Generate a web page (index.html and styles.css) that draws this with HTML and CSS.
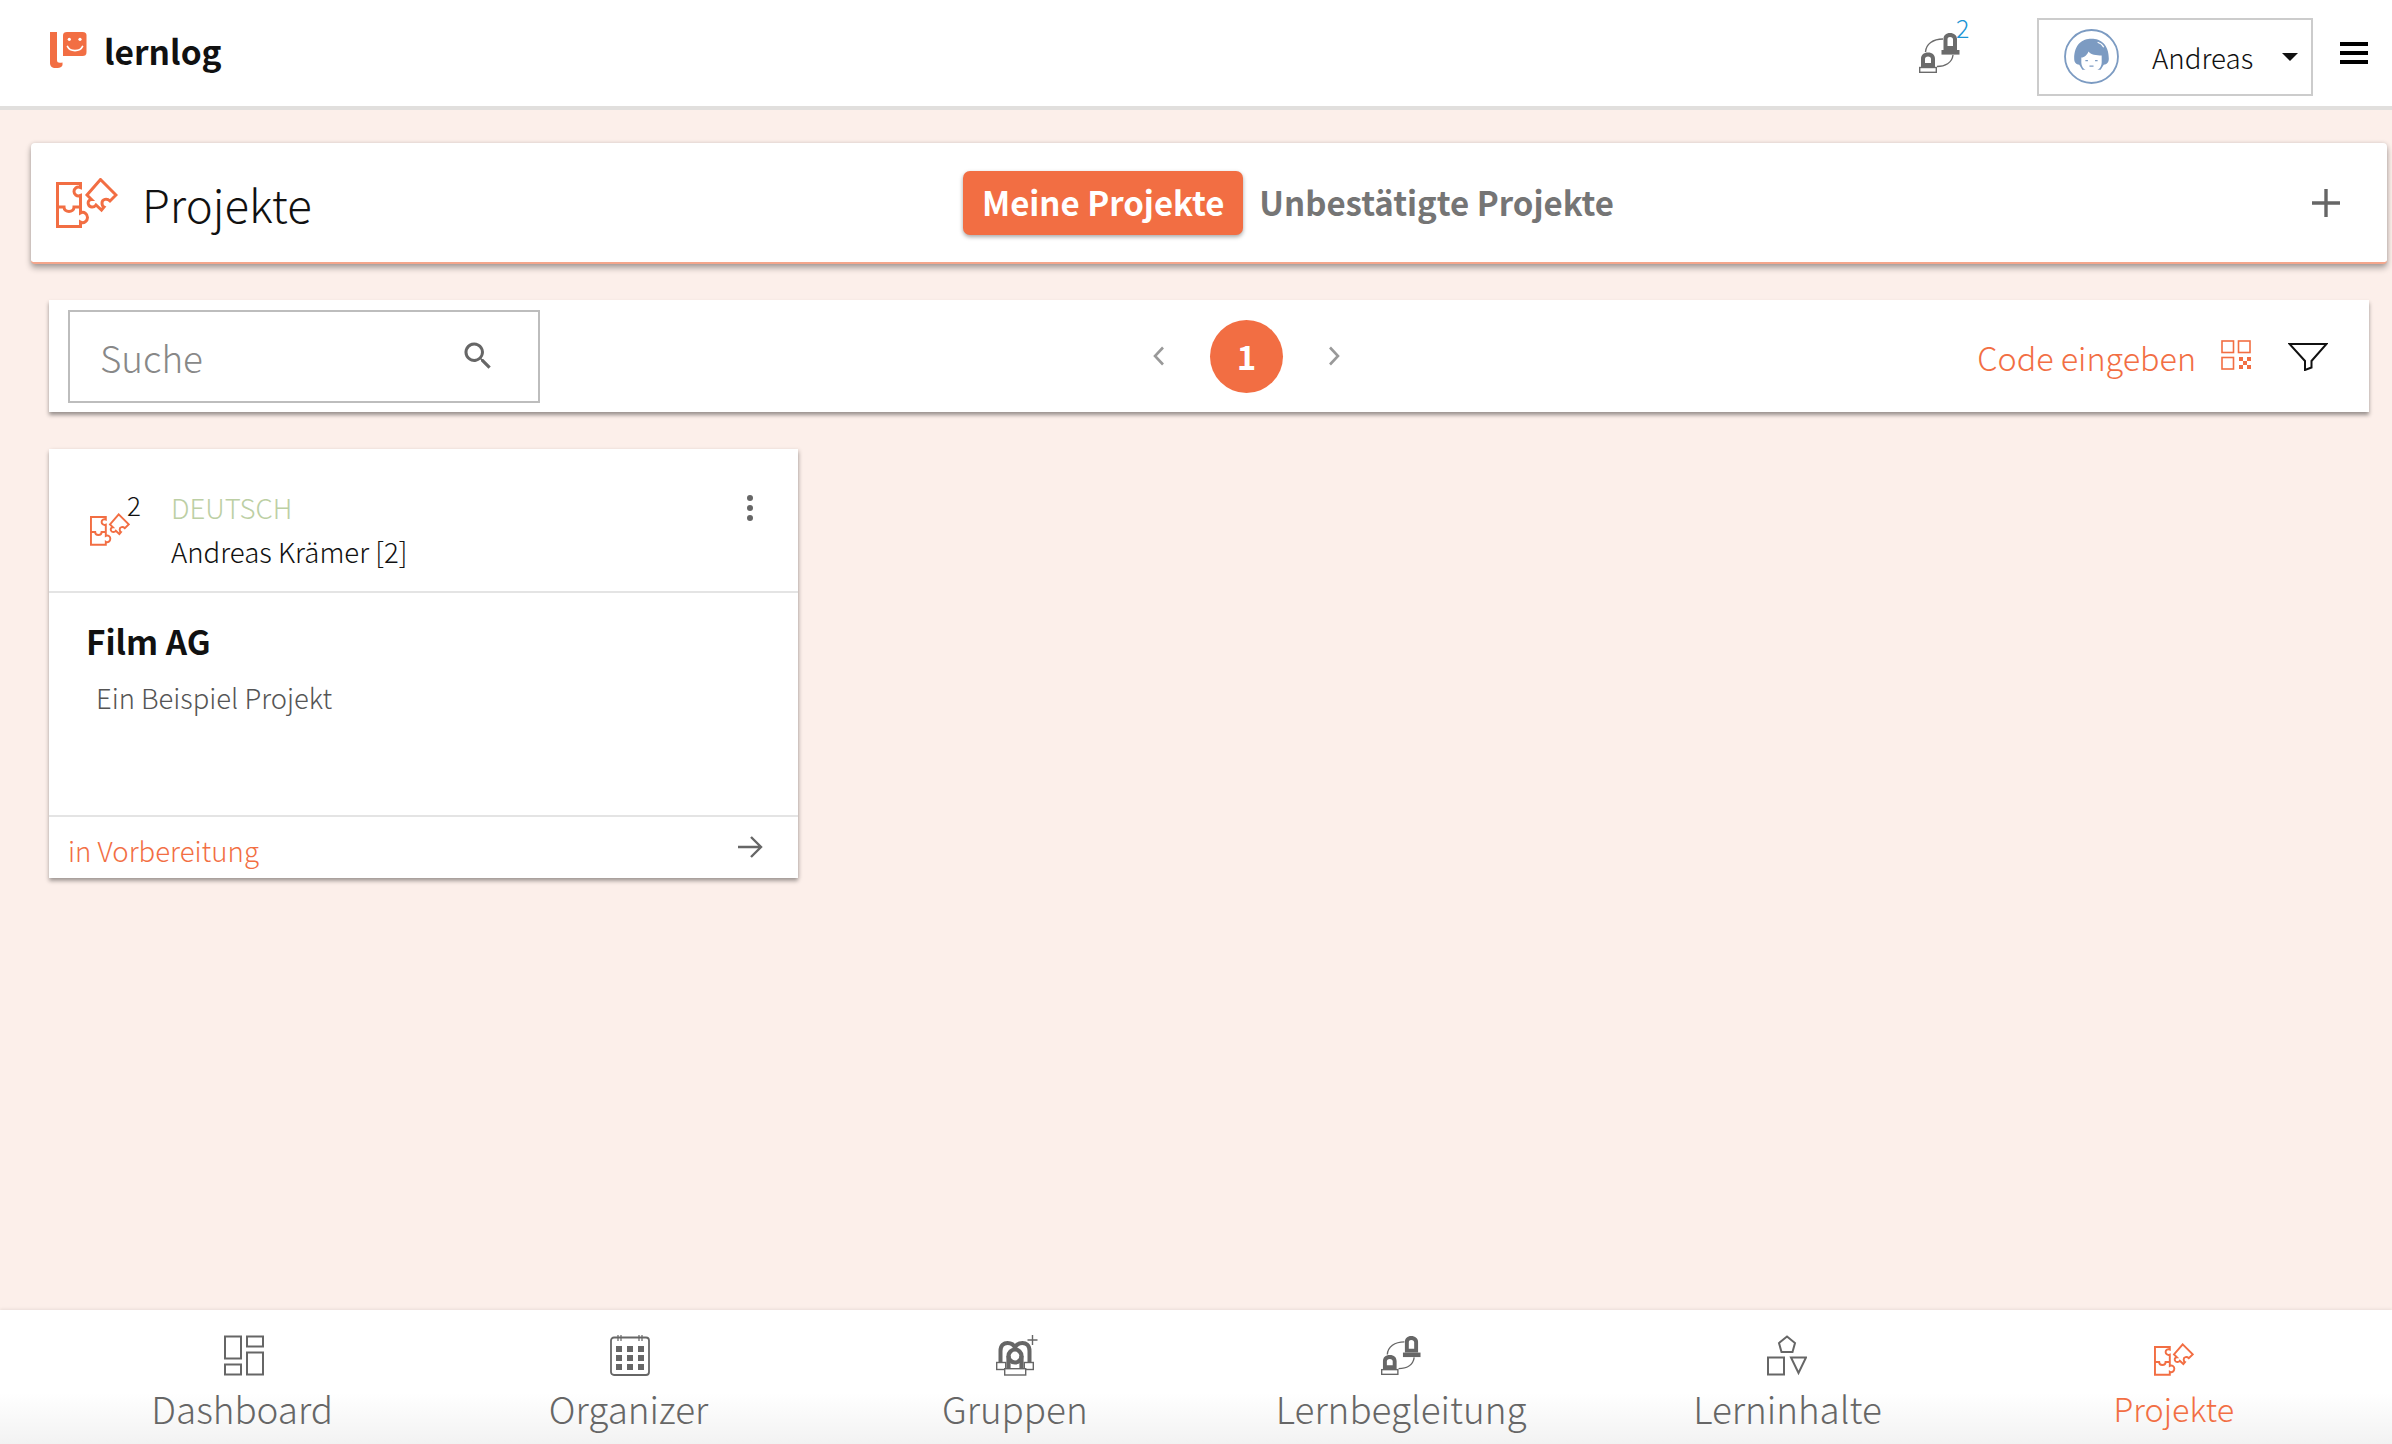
FILE: index.html
```html
<!DOCTYPE html>
<html lang="de">
<head>
<meta charset="utf-8">
<title>lernlog</title>
<link rel="stylesheet" href="styles.css">
</head>
<body>
<svg class="defs" width="0" height="0">
  <symbol id="puzzle" viewBox="0 0 62 50">
    <g fill="none" stroke="currentColor" stroke-width="3">
      <path d="M1.500 5.500H24.500V9.500C20.500 8 18 11 18 13.500C18 16 20.500 19 24.500 17.500V29V35C28 33 31.500 36 31.500 39.500C31.500 43 28 46 24.500 44V48.500H1.500Z"/>
      <path d="M1.500 29H8C8 35 18 35 18 29H24.500"/>
      <path d="M44.500 1.500L60 17L54 23C51 20 46 21 46 25C46 27 47 28.500 48 29L45.500 32L40 27C38 30 33.500 29.500 32.500 26.500C31.500 24 33 21.500 35.500 21.500L31 17Z"/>
    </g>
  </symbol>
  <symbol id="mentor" viewBox="0 0 41 40">
    <g fill="none" stroke="currentColor">
      <path stroke-width="1.400" d="M6.500 19C7 11 14 6 24 6M18 33.500C26 33.500 33 30 34 22"/>
      <path fill="currentColor" stroke="none" fill-rule="evenodd" d="M2 34V26C2 22 4.500 19.500 9 19.500C13.500 19.500 16 22 16 26V34ZM6 30H12V26C12 24.500 11 23.500 9 23.500C7 23.500 6 24.500 6 26Z"/>
      <path fill="currentColor" stroke="none" fill-rule="evenodd" d="M24.500 17V6C24.500 2.500 27 0 31 0C35 0 38 2.500 38 6V17ZM28.500 13H34V6.500C34 5 33 4 31 4C29 4 28.500 5 28.500 6.500Z"/>
      <rect x="0.700" y="34.500" width="16.600" height="4.800" fill="#fff" stroke-width="1.400"/>
      <rect x="22.500" y="17" width="18" height="4.600" fill="currentColor" stroke="none"/>
    </g>
  </symbol>
</svg>

<div class="page">
  <header class="topbar">
    <div class="brand">
      <svg class="brand-mark" viewBox="0 0 37 37" aria-hidden="true">
        <path fill="#f26e43" d="M0 0H7V28C7 31 9 31 12.500 30.500V33C12 35.500 9 36 5.500 36C2 36 0 34 0 31Z"/>
        <path fill="#f26e43" d="M13 3.500C13 1 14.500 0 17 0H32.500C35.500 0 36.500 1.500 36.500 3.500V20C36.500 23 35 24 32.500 24H13Z"/>
        <circle cx="19.300" cy="7.300" r="1.600" fill="#fff"/><circle cx="30" cy="7.300" r="1.600" fill="#fff"/>
        <path d="M17.500 14.500C20 20 30 20 32.500 14.500" fill="none" stroke="#fff" stroke-width="1.800" stroke-linecap="round"/>
      </svg>
      <span class="brand-name">lernlog</span>
    </div>
    <div class="top-actions">
      <div class="notify">
        <svg class="icon-mentor"><use href="#mentor"/></svg>
        <span class="notify-count">2</span>
      </div>
      <div class="user">
        <svg class="avatar" viewBox="0 0 54 54" aria-hidden="true">
          <circle cx="27" cy="27" r="26" fill="#fff" stroke="#7c9bc2" stroke-width="1.800"/>
          <path fill="#7c9bc2" d="M10 29C10 15 18 9.500 27 9.500C36 9.500 44 15 44 29C44 33 42 35 39 35L36 40H18L15 35C12 35 10 33 10 29Z"/>
          <path fill="#fff" d="M17 28C20 28 23 25 24 22C26 25 32 26 37 26V33C37 38 33 42 27 42C21 42 17 38 17 33Z"/>
          <path d="M21 31H23.500M30.500 31H33M25 36.500H29" stroke="#7c9bc2" stroke-width="1.200" fill="none"/>
          <path d="M33 13C36 14 38 16 39 18" stroke="#fff" stroke-width="1.200" fill="none"/>
        </svg>
        <span class="user-name">Andreas</span>
        <span class="caret"></span>
      </div>
      <div class="burger"><span></span><span></span><span></span></div>
    </div>
  </header>

  <main class="content">
    <section class="title-card">
      <div class="title-left">
        <svg class="icon-puzzle-lg"><use href="#puzzle"/></svg>
        <h1 class="title">Projekte</h1>
      </div>
      <div class="tabs">
        <span class="tab tab-active">Meine Projekte</span>
        <span class="tab">Unbestätigte Projekte</span>
      </div>
      <span class="add">
        <svg viewBox="0 0 30 30" aria-hidden="true"><path d="M15 1V29M1 15H29" stroke="#666" stroke-width="3.400" fill="none"/></svg>
      </span>
    </section>

    <section class="toolbar">
      <div class="search">
        <span class="search-text">Suche</span>
        <svg class="search-icon" viewBox="0 0 24 24" aria-hidden="true"><path fill="#666" d="M15.500 14h-.8l-.3-.3A6.500 6.500 0 1 0 13.700 14.400l.3.300v.8l5 5 1.500-1.500zm-6 0a4.500 4.500 0 1 1 0-9 4.500 4.500 0 0 1 0 9z"/></svg>
      </div>
      <nav class="pager">
        <svg class="chev" viewBox="0 0 12 20" aria-hidden="true"><path d="M10 1.500L2 10L10 18.500" fill="none" stroke="#999" stroke-width="2.600"/></svg>
        <span class="page-num">1</span>
        <svg class="chev" viewBox="0 0 12 20" aria-hidden="true"><path d="M2 1.500L10 10L2 18.500" fill="none" stroke="#999" stroke-width="2.600"/></svg>
      </nav>
      <div class="tools">
        <span class="code-label">Code eingeben</span>
        <svg class="qr" viewBox="0 0 30 30" aria-hidden="true">
          <g fill="none" stroke="#f26e43" stroke-width="1.600"><rect x="1" y="1" width="11.500" height="11.500"/><rect x="17.500" y="1" width="11.500" height="11.500"/><rect x="1" y="17.500" width="11.500" height="11.500"/></g>
          <path fill="#f26e43" d="M18 17h4v4h-4zM26 17h4v4h-4zM22 21h4v4h-4zM18 25h4v4h-4zM26 25h4v4h-4z"/>
        </svg>
        <svg class="funnel" viewBox="0 0 40 28" aria-hidden="true"><path d="M1.500 1H38.500L23.500 18V24.500L17 27V18Z" fill="none" stroke="#111" stroke-width="2"/></svg>
      </div>
    </section>

    <article class="card">
      <div class="card-head">
        <div class="card-icon">
          <svg class="icon-puzzle-sm"><use href="#puzzle"/></svg>
          <span class="card-count">2</span>
        </div>
        <div class="card-meta">
          <div class="card-subject">DEUTSCH</div>
          <div class="card-owner">Andreas Krämer [2]</div>
        </div>
        <span class="kebab"><i></i><i></i><i></i></span>
      </div>
      <div class="card-body">
        <h2 class="card-title">Film AG</h2>
        <p class="card-desc">Ein Beispiel Projekt</p>
      </div>
      <div class="card-foot">
        <span class="card-status">in Vorbereitung</span>
        <svg class="arrow" viewBox="0 0 26 24" aria-hidden="true"><path d="M1 12H24M14 2L24 12L14 22" fill="none" stroke="#666" stroke-width="2.400"/></svg>
      </div>
    </article>
  </main>

  <footer class="bottomnav">
    <a class="nav-item">
      <svg class="nav-icon nav-icon-shift" viewBox="0 0 40 40" aria-hidden="true"><g fill="none" stroke="currentColor" stroke-width="2"><rect x="1" y="1" width="16" height="22"/><rect x="1" y="29" width="16" height="10"/><rect x="23" y="1" width="16" height="10"/><rect x="23" y="17" width="16" height="22"/></g></svg>
      <span>Dashboard</span>
    </a>
    <a class="nav-item">
      <svg class="nav-icon nav-icon-shift" viewBox="0 0 40 41" aria-hidden="true"><rect x="1" y="2.500" width="38" height="37.500" rx="3" fill="none" stroke="currentColor" stroke-width="1.800"/><path d="M8 0V6M11 0V6M29 0V6M32 0V6" stroke="currentColor" stroke-width="1.200"/><path fill="currentColor" d="M6 11h6v6H6zM17 11h6v6h-6zM28 11h6v6h-6zM6 20h6v6H6zM17 20h6v6h-6zM28 20h6v6h-6zM6 29h6v6H6zM17 29h6v6h-6zM28 29h6v6h-6z"/></svg>
      <span>Organizer</span>
    </a>
    <a class="nav-item">
      <svg class="nav-icon nav-icon-wide nav-icon-shift" viewBox="0 0 42 41" aria-hidden="true">
        <path d="M36.500 0V10M31.500 5H41.500" stroke="currentColor" stroke-width="1.400" fill="none"/>
        <g fill="none" stroke="currentColor"><path stroke-width="4" d="M4.500 28V16C4.500 10 8 8 11.500 8C15 8 18 10 19 13C20 10 23 8 26.500 8C30 8 33.500 10 33.500 16V28"/><circle cx="19" cy="21" r="6.500" stroke-width="4.200" fill="#fff"/><path stroke-width="4.200" d="M12.500 21V33M25.500 21V33"/>
        <rect x="0.700" y="27.500" width="9" height="7" fill="#fff" stroke-width="1.400"/><rect x="28.300" y="27.500" width="9" height="7" fill="#fff" stroke-width="1.400"/><rect x="8.700" y="33.700" width="21" height="6.300" fill="#fff" stroke-width="1.400"/></g>
      </svg>
      <span>Gruppen</span>
    </a>
    <a class="nav-item">
      <svg class="nav-icon"><use href="#mentor"/></svg>
      <span>Lernbegleitung</span>
    </a>
    <a class="nav-item">
      <svg class="nav-icon" viewBox="0 0 40 40" aria-hidden="true"><g fill="none" stroke="currentColor" stroke-width="2"><path d="M20 1L28 7.500L25.500 16.500H14.500L12 7.500Z"/><rect x="1" y="22" width="16" height="17"/><path d="M24 22H39L31.500 37.500Z"/></g></svg>
      <span>Lerninhalte</span>
    </a>
    <a class="nav-item nav-item-active">
      <svg class="nav-icon nav-icon-puzzle"><use href="#puzzle"/></svg>
      <span>Projekte</span>
    </a>
  </footer>
</div>
</body>
</html>
```

FILE: styles.css
```css
* { box-sizing: border-box; }
html, body { margin: 0; padding: 0; }
body {
  font-family: "Noto Sans CJK SC", "Noto Sans", sans-serif;
  font-weight: 300;
  color: #111;
  background: #fcefea;
}
.defs { position: absolute; }
.page {
  width: 2392px;
  height: 1444px;
  display: flex;
  flex-direction: column;
  overflow: hidden;
}

/* top bar */
.topbar {
  height: 110px;
  flex: none;
  background: #fff;
  border-bottom: 4px solid #e1dfdd;
  display: flex;
  align-items: center;
  justify-content: space-between;
  padding: 0 24px 0 50px;
}
.brand { display: flex; align-items: center; gap: 17px; }
.brand-mark { width: 37px; height: 37px; margin-top: -6px; }
.brand-name { font-size: 33.500px; font-weight: 700; color: #111; line-height: 1; margin-top: -5px; }
.top-actions { display: flex; align-items: center; }
.notify { position: relative; width: 41px; height: 40px; margin-right: 77px; color: #6b6b6b; }
.icon-mentor { width: 41px; height: 40px; display: block; }
.notify-count { position: absolute; left: 37px; top: -21px; font-size: 25px; line-height: 30px; color: #1b95d5; }
.user {
  width: 276px;
  height: 78px;
  margin: 7px 1px 0 0;
  border: 2px solid #cccccc;
  display: flex;
  align-items: center;
  padding: 0 13px 0 25px;
}
.avatar { width: 55px; height: 55px; flex: none; }
.user-name { font-size: 27.700px; margin-left: 33px; flex: 1; color: #111; }
.caret { width: 0; height: 0; border: 8px solid transparent; border-top: 8px solid #111; border-bottom: 0; }
.burger { width: 28px; margin-left: 26px; display: flex; flex-direction: column; gap: 5px; }
.burger span { display: block; height: 4px; background: #000; }

/* content */
.content { flex: 1; padding: 33px 5px 0 31px; min-height: 0; }
.title-card {
  height: 121px;
  background: #fff;
  border-radius: 4px;
  border-bottom: 2px solid #f4a68c;
  box-shadow: 0 4px 6px rgba(0,0,0,.32), 0 0 4px rgba(0,0,0,.12);
  display: grid;
  grid-template-columns: 907px auto 1fr;
  align-items: center;
  padding: 0 46px 0 25px;
}
.title-left { display: flex; align-items: center; gap: 24px; }
.icon-puzzle-lg { width: 62px; height: 50px; color: #f26e43; }
.title { font-size: 45.500px; font-weight: 300; margin: 3px 0 0; line-height: 1; color: #111; }
.tabs { display: flex; align-items: center; gap: 16px; margin-top: 1px; }
.tab { font-size: 33px; font-weight: 700; color: #757575; line-height: 1; padding: 15px 0 16px; }
.tab-active {
  background: #f26e43;
  color: #fff;
  padding: 15px 19px 16px;
  border-radius: 7px;
  box-shadow: 0 2px 4px rgba(0,0,0,.35);
}
.add { justify-self: end; width: 30px; height: 30px; }
.add svg { display: block; width: 30px; height: 30px; }

.toolbar {
  height: 112px;
  margin: 36px 18px 0 18px;
  background: #fff;
  box-shadow: 0 3px 4px rgba(0,0,0,.4);
  display: grid;
  grid-template-columns: 1086px auto 1fr;
  align-items: center;
  padding: 0 41px 0 19px;
}
.search {
  width: 472px;
  height: 93px;
  border: 2px solid #bdbdbd;
  display: flex;
  align-items: center;
  justify-content: space-between;
  padding: 0 42px 0 30px;
}
.search-text { font-size: 36.800px; color: #888; line-height: 1; margin-top: 2px; }
.search-icon { width: 36px; height: 36px; margin-top: 0; }
.pager { display: flex; align-items: center; gap: 45px; margin-left: -1px; }
.chev { width: 12px; height: 20px; }
.page-num {
  width: 73px; height: 73px; border-radius: 50%;
  background: #f26e43; color: #fff;
  font-size: 33px; font-weight: 700;
  display: flex; align-items: center; justify-content: center;
}
.tools { display: flex; align-items: center; justify-content: flex-end; }
.code-label { font-size: 32.300px; color: #f26e43; line-height: 1; margin-top: 2px; }
.qr { width: 30px; height: 30px; margin-left: 25px; margin-top: -2px; }
.funnel { width: 40px; height: 28px; margin-left: 37px; margin-top: 2px; }

.card {
  width: 749px;
  height: 429px;
  margin: 37px 0 0 18px;
  background: #fff;
  box-shadow: 0 3px 4px rgba(0,0,0,.35), 2px 0 4px rgba(0,0,0,.06);
  display: flex;
  flex-direction: column;
}
.card-head {
  height: 144px;
  flex: none;
  border-bottom: 2px solid #e4e4e4;
  display: flex;
  align-items: flex-start;
  padding: 40px 45px 0 41px;
}
.card-icon { position: relative; width: 40px; height: 60px; flex: none; color: #f26e43; }
.icon-puzzle-sm { position: absolute; left: 0; top: 24px; width: 40px; height: 33px; }
.card-count { position: absolute; left: 37px; top: 1px; font-size: 26px; line-height: 30px; color: #111; }
.card-meta { flex: 1; margin-left: 41px; }
.card-subject { font-size: 27.600px; line-height: 36px; color: #bccfa4; }
.card-owner { font-size: 27.600px; line-height: 36px; margin-top: 8px; color: #111; }
.kebab { display: flex; flex-direction: column; gap: 4px; padding-top: 6px; }
.kebab i { width: 6px; height: 6px; background: #666; border-radius: 50%; display: block; }
.card-body { flex: 1; padding: 26px 37px 0; }
.card-title { font-size: 33.300px; font-weight: 700; margin: 0; line-height: 44px; color: #111; }
.card-desc { font-size: 27.400px; margin: 16px 0 0 10px; line-height: 36px; color: #555; }
.card-foot {
  height: 63px;
  flex: none;
  border-top: 2px solid #e4e4e4;
  display: flex;
  align-items: center;
  justify-content: space-between;
  padding: 0 35px 0 19px;
}
.card-status { font-size: 27.600px; color: #f26e43; line-height: 36px; margin-top: 4px; }
.arrow { width: 26px; height: 24px; margin-top: -1px; }

/* bottom nav */
.bottomnav {
  height: 134px;
  flex: none;
  background: linear-gradient(#fff 0, #fff 62%, #f2f2f2 100%);
  box-shadow: 0 -1px 3px rgba(0,0,0,.08);
  display: grid;
  grid-template-columns: repeat(6, 1fr);
  padding: 0 25px 0 49px;
}
.nav-item {
  display: flex;
  flex-direction: column;
  align-items: center;
  padding-top: 25px;
  color: #666;
}
.nav-item span { font-size: 36.800px; line-height: 50px; margin-top: 7px; }
.nav-item-active { color: #f26e43; }
.nav-item-active span { font-size: 32.300px; }
.nav-icon { width: 40px; height: 41px; display: block; flex: none; }
.nav-icon-wide { width: 42px; }
.nav-icon-shift { transform: translateX(2px); }
.nav-icon-puzzle { width: 40px; height: 33px; margin-top: 8px; }
```
